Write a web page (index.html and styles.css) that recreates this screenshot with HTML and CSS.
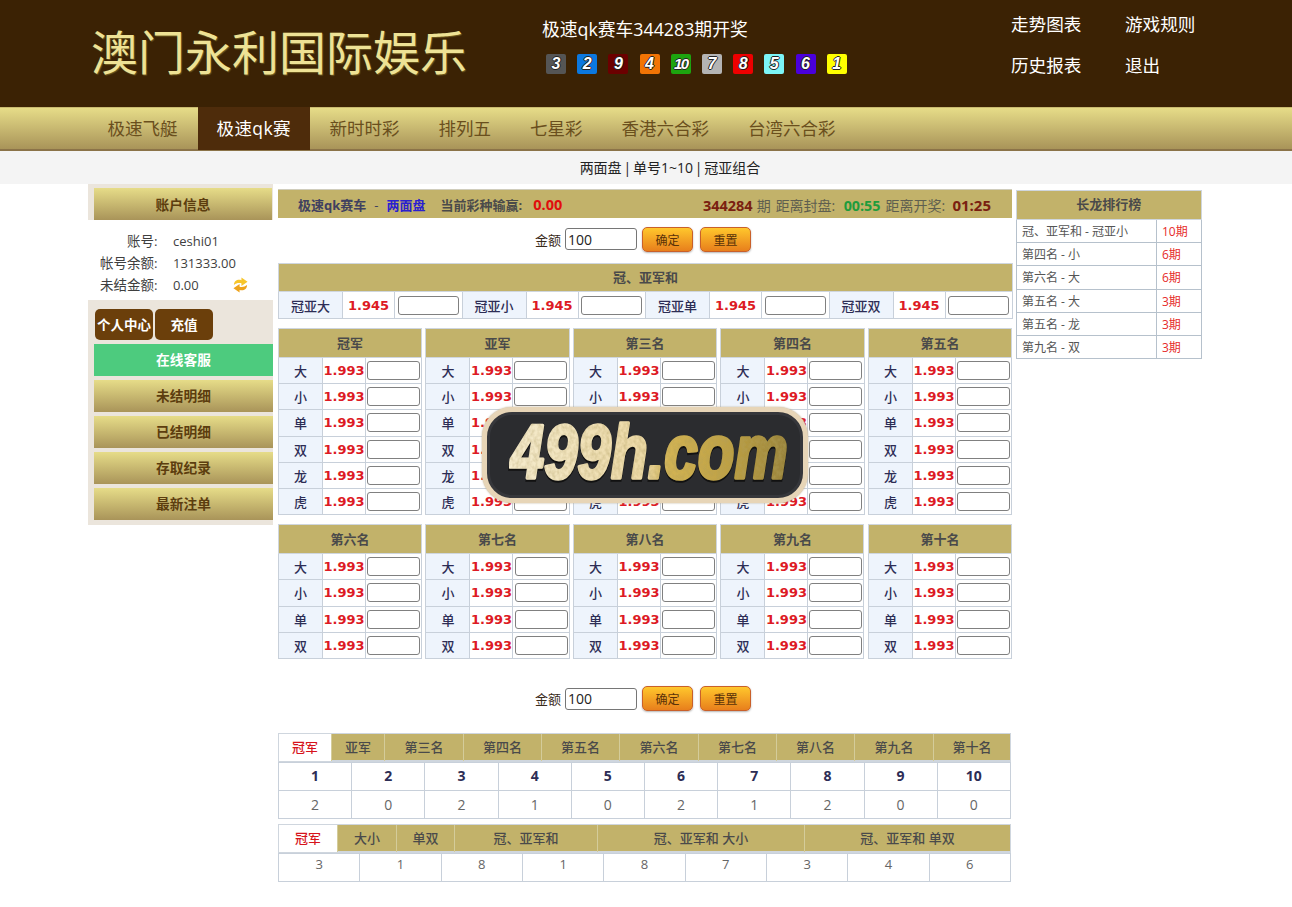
FILE: index.html
```html
<!DOCTYPE html>
<html lang="zh-CN">
<head>
<meta charset="utf-8">
<title>澳门永利国际娱乐</title>
<link rel="stylesheet" href="styles.css">
</head>
<body>
<header class="top">
  <h1 class="brand">澳门永利国际娱乐</h1>
  <div class="draw">
    <p class="draw-title">极速qk赛车344283期开奖</p>
    <div class="balls">
      <span class="ball b3">3</span><span class="ball b2">2</span><span class="ball b9">9</span><span class="ball b4">4</span><span class="ball b10">10</span><span class="ball b7">7</span><span class="ball b8">8</span><span class="ball b5">5</span><span class="ball b6">6</span><span class="ball b1">1</span>
    </div>
  </div>
  <nav class="top-links">
    <a>走势图表</a><a>游戏规则</a><a>历史报表</a><a>退出</a>
  </nav>
</header>
<nav class="mainnav">
  <a>极速飞艇</a><a class="on">极速qk赛</a><a>新时时彩</a><a>排列五</a><a>七星彩</a><a>香港六合彩</a><a>台湾六合彩</a>
</nav>
<div class="subnav">两面盘 | 单号1~10 | 冠亚组合</div>

<div class="layout">
  <aside class="side">
    <div class="side-head"><div class="gold-btn">账户信息</div></div>
    <dl class="info">
      <dt>账号:</dt><dd>ceshi01</dd>
      <dt>帐号余额:</dt><dd>131333.00</dd>
      <dt>未结金额:</dt><dd class="with-icon">0.00
        <svg class="refresh" viewBox="0 0 16 16" width="15" height="16"><path d="M1 8 C1 3.500 5 1.500 9 2.800 L9 0 L15.500 4.500 L9 9 L9 6.200 C6 5.500 3.500 6 1 8Z" fill="#f7c52a"/><path d="M15 8 C15 12.500 11 14.500 7 13.200 L7 16 L0.500 11.500 L7 7 L7 9.800 C10 10.500 12.500 10 15 8Z" fill="#eea31b"/></svg>
      </dd>
    </dl>
    <div class="side-menu">
      <div class="pair"><a class="brown">个人中心</a><a class="brown">充值</a></div>
      <a class="green">在线客服</a>
      <a class="gold-btn">未结明细</a>
      <a class="gold-btn">已结明细</a>
      <a class="gold-btn">存取纪录</a>
      <a class="gold-btn">最新注单</a>
    </div>
  </aside>

  <main class="main">
    <div class="statusbar">
      <div class="st-left"><b>极速qk赛车</b><span class="dash">-</span><b class="blue">两面盘</b><b class="win-label">当前彩种输赢:</b><b class="red-num">0.00</b></div>
      <div class="st-right"><b class="dark-red">344284</b><span class="qi">期</span><span class="lbl">距离封盘:</span><b class="green-time">00:55</b><span class="lbl">距离开奖:</span><b class="dark-red time">01:25</b></div>
    </div>

    <form class="amount first"><label>金额</label><input class="amt" value="100"><button type="button" class="orange">确定</button><button type="button" class="orange">重置</button></form>

    <table class="sum">
      <colgroup><col class="s1"><col class="s2"><col class="s3"><col class="s1"><col class="s2"><col class="s3"><col class="s1"><col class="s2"><col class="s3"><col class="s1"><col class="s2"><col class="s3"></colgroup>
      <tr><th colspan="12">冠、亚军和</th></tr>
      <tr><td class="lb">冠亚大</td><td class="odd">1.945</td><td><input class="bet"></td><td class="lb">冠亚小</td><td class="odd">1.945</td><td><input class="bet"></td><td class="lb">冠亚单</td><td class="odd">1.945</td><td><input class="bet"></td><td class="lb">冠亚双</td><td class="odd">1.945</td><td><input class="bet"></td></tr>
    </table>

    <div class="ranks six">
      <table class="rank"><colgroup><col class="r1"><col class="r2"><col class="r3"></colgroup><tr><th colspan="3">冠军</th></tr>
        <tr><td class="lb">大</td><td class="odd">1.993</td><td><input class="bet"></td></tr><tr><td class="lb">小</td><td class="odd">1.993</td><td><input class="bet"></td></tr><tr><td class="lb">单</td><td class="odd">1.993</td><td><input class="bet"></td></tr><tr><td class="lb">双</td><td class="odd">1.993</td><td><input class="bet"></td></tr><tr><td class="lb">龙</td><td class="odd">1.993</td><td><input class="bet"></td></tr><tr><td class="lb">虎</td><td class="odd">1.993</td><td><input class="bet"></td></tr></table>
      <table class="rank"><colgroup><col class="r1"><col class="r2"><col class="r3"></colgroup><tr><th colspan="3">亚军</th></tr>
        <tr><td class="lb">大</td><td class="odd">1.993</td><td><input class="bet"></td></tr><tr><td class="lb">小</td><td class="odd">1.993</td><td><input class="bet"></td></tr><tr><td class="lb">单</td><td class="odd">1.993</td><td><input class="bet"></td></tr><tr><td class="lb">双</td><td class="odd">1.993</td><td><input class="bet"></td></tr><tr><td class="lb">龙</td><td class="odd">1.993</td><td><input class="bet"></td></tr><tr><td class="lb">虎</td><td class="odd">1.993</td><td><input class="bet"></td></tr></table>
      <table class="rank"><colgroup><col class="r1"><col class="r2"><col class="r3"></colgroup><tr><th colspan="3">第三名</th></tr>
        <tr><td class="lb">大</td><td class="odd">1.993</td><td><input class="bet"></td></tr><tr><td class="lb">小</td><td class="odd">1.993</td><td><input class="bet"></td></tr><tr><td class="lb">单</td><td class="odd">1.993</td><td><input class="bet"></td></tr><tr><td class="lb">双</td><td class="odd">1.993</td><td><input class="bet"></td></tr><tr><td class="lb">龙</td><td class="odd">1.993</td><td><input class="bet"></td></tr><tr><td class="lb">虎</td><td class="odd">1.993</td><td><input class="bet"></td></tr></table>
      <table class="rank"><colgroup><col class="r1"><col class="r2"><col class="r3"></colgroup><tr><th colspan="3">第四名</th></tr>
        <tr><td class="lb">大</td><td class="odd">1.993</td><td><input class="bet"></td></tr><tr><td class="lb">小</td><td class="odd">1.993</td><td><input class="bet"></td></tr><tr><td class="lb">单</td><td class="odd">1.993</td><td><input class="bet"></td></tr><tr><td class="lb">双</td><td class="odd">1.993</td><td><input class="bet"></td></tr><tr><td class="lb">龙</td><td class="odd">1.993</td><td><input class="bet"></td></tr><tr><td class="lb">虎</td><td class="odd">1.993</td><td><input class="bet"></td></tr></table>
      <table class="rank"><colgroup><col class="r1"><col class="r2"><col class="r3"></colgroup><tr><th colspan="3">第五名</th></tr>
        <tr><td class="lb">大</td><td class="odd">1.993</td><td><input class="bet"></td></tr><tr><td class="lb">小</td><td class="odd">1.993</td><td><input class="bet"></td></tr><tr><td class="lb">单</td><td class="odd">1.993</td><td><input class="bet"></td></tr><tr><td class="lb">双</td><td class="odd">1.993</td><td><input class="bet"></td></tr><tr><td class="lb">龙</td><td class="odd">1.993</td><td><input class="bet"></td></tr><tr><td class="lb">虎</td><td class="odd">1.993</td><td><input class="bet"></td></tr></table>
    </div>

    <div class="ranks four">
      <table class="rank"><colgroup><col class="r1"><col class="r2"><col class="r3"></colgroup><tr><th colspan="3">第六名</th></tr>
        <tr><td class="lb">大</td><td class="odd">1.993</td><td><input class="bet"></td></tr><tr><td class="lb">小</td><td class="odd">1.993</td><td><input class="bet"></td></tr><tr><td class="lb">单</td><td class="odd">1.993</td><td><input class="bet"></td></tr><tr><td class="lb">双</td><td class="odd">1.993</td><td><input class="bet"></td></tr></table>
      <table class="rank"><colgroup><col class="r1"><col class="r2"><col class="r3"></colgroup><tr><th colspan="3">第七名</th></tr>
        <tr><td class="lb">大</td><td class="odd">1.993</td><td><input class="bet"></td></tr><tr><td class="lb">小</td><td class="odd">1.993</td><td><input class="bet"></td></tr><tr><td class="lb">单</td><td class="odd">1.993</td><td><input class="bet"></td></tr><tr><td class="lb">双</td><td class="odd">1.993</td><td><input class="bet"></td></tr></table>
      <table class="rank"><colgroup><col class="r1"><col class="r2"><col class="r3"></colgroup><tr><th colspan="3">第八名</th></tr>
        <tr><td class="lb">大</td><td class="odd">1.993</td><td><input class="bet"></td></tr><tr><td class="lb">小</td><td class="odd">1.993</td><td><input class="bet"></td></tr><tr><td class="lb">单</td><td class="odd">1.993</td><td><input class="bet"></td></tr><tr><td class="lb">双</td><td class="odd">1.993</td><td><input class="bet"></td></tr></table>
      <table class="rank"><colgroup><col class="r1"><col class="r2"><col class="r3"></colgroup><tr><th colspan="3">第九名</th></tr>
        <tr><td class="lb">大</td><td class="odd">1.993</td><td><input class="bet"></td></tr><tr><td class="lb">小</td><td class="odd">1.993</td><td><input class="bet"></td></tr><tr><td class="lb">单</td><td class="odd">1.993</td><td><input class="bet"></td></tr><tr><td class="lb">双</td><td class="odd">1.993</td><td><input class="bet"></td></tr></table>
      <table class="rank"><colgroup><col class="r1"><col class="r2"><col class="r3"></colgroup><tr><th colspan="3">第十名</th></tr>
        <tr><td class="lb">大</td><td class="odd">1.993</td><td><input class="bet"></td></tr><tr><td class="lb">小</td><td class="odd">1.993</td><td><input class="bet"></td></tr><tr><td class="lb">单</td><td class="odd">1.993</td><td><input class="bet"></td></tr><tr><td class="lb">双</td><td class="odd">1.993</td><td><input class="bet"></td></tr></table>
    </div>

    <form class="amount second"><label>金额</label><input class="amt" value="100"><button type="button" class="orange">确定</button><button type="button" class="orange">重置</button></form>

    <div class="tabs tabs-a"><a class="on">冠军</a><a>亚军</a><a>第三名</a><a>第四名</a><a>第五名</a><a>第六名</a><a>第七名</a><a>第八名</a><a>第九名</a><a>第十名</a></div>
    <table class="stats ten">
      <tr class="nums"><td>1</td><td>2</td><td>3</td><td>4</td><td>5</td><td>6</td><td>7</td><td>8</td><td>9</td><td>10</td></tr>
      <tr><td>2</td><td>0</td><td>2</td><td>1</td><td>0</td><td>2</td><td>1</td><td>2</td><td>0</td><td>0</td></tr>
    </table>
    <div class="tabs tabs-b"><a class="on">冠军</a><a>大小</a><a>单双</a><a>冠、亚军和</a><a>冠、亚军和 大小</a><a>冠、亚军和 单双</a></div>
    <table class="stats nine">
      <tr><td>3</td><td>1</td><td>8</td><td>1</td><td>8</td><td>7</td><td>3</td><td>4</td><td>6</td></tr>
    </table>
  </main>

  <aside class="dragon">
    <table class="dragon-table">
      <colgroup><col class="d1"><col class="d2"></colgroup>
      <tr><th colspan="2">长龙排行榜</th></tr>
      <tr><td>冠、亚军和 - 冠亚小</td><td class="period">10期</td></tr>
      <tr><td>第四名 - 小</td><td class="period">6期</td></tr>
      <tr><td>第六名 - 大</td><td class="period">6期</td></tr>
      <tr><td>第五名 - 大</td><td class="period">3期</td></tr>
      <tr><td>第五名 - 龙</td><td class="period">3期</td></tr>
      <tr><td>第九名 - 双</td><td class="period">3期</td></tr>
    </table>
  </aside>
</div>

<div class="watermark">
  <svg class="wm-svg" viewBox="0 0 316 86" width="316" height="86">
    <defs>
      <linearGradient id="wmGold" gradientUnits="userSpaceOnUse" x1="34" y1="0" x2="390" y2="0">
        <stop offset="0" stop-color="#f5ebcd"/>
        <stop offset="0.48" stop-color="#ecd9a6"/>
        <stop offset="0.56" stop-color="#d2b354"/>
        <stop offset="0.78" stop-color="#bda044"/>
        <stop offset="1" stop-color="#95803a"/>
      </linearGradient>
      <filter id="wmGrain" x="0" y="0" width="100%" height="100%">
        <feTurbulence type="fractalNoise" baseFrequency="0.22" numOctaves="2" seed="4" result="n"/>
        <feColorMatrix in="n" type="matrix" values="0 0 0 0 0.45  0 0 0 0 0.35  0 0 0 0 0.1  0 0 0 0.9 -0.3" result="spots"/>
        <feComposite in="spots" in2="SourceAlpha" operator="in" result="inside"/>
        <feMerge><feMergeNode in="SourceGraphic"/><feMergeNode in="inside"/></feMerge>
      </filter>
    </defs>
    <g transform="translate(-3 0) scale(0.79 1)">
      <text class="wm-shadow" x="34" y="68">499h.com</text>
      <text class="wm-text" x="34" y="66" fill="url(#wmGold)" stroke="url(#wmGold)" filter="url(#wmGrain)">499h.com</text>
    </g>
  </svg>
</div>
</body>
</html>
```
FILE: styles.css
```css
* { box-sizing: border-box; }
html, body { margin: 0; padding: 0; }
body {
  font-family: "Open Sans", "Noto Sans CJK SC", sans-serif;
  font-size: 13px;
  color: #333;
  background: #fff;
  width: 1292px;
  height: 907px;
  overflow: hidden;
  position: relative;
}
a { color: inherit; text-decoration: none; }

/* top header */
.top {
  height: 107px;
  background: #3b2204;
  padding-left: 91px;
  display: flex;
}
.brand {
  margin: 0;
  width: 451px;
  padding-top: 18px;
  font-size: 47px;
  line-height: 68px;
  font-weight: 400;
  color: #eee295;
  white-space: nowrap;
  text-shadow: 1px 1px 1px #6d5a22;
}
.draw { width: 469px; padding-top: 16px; }
.draw-title { margin: 0; font-size: 17.8px; line-height: 26px; color: #fff; white-space: nowrap; }
.balls { display: flex; gap: 11.2px; margin-top: 12px; padding-left: 4px; }
.ball {
  width: 20px;
  height: 20px;
  border-radius: 2px;
  text-align: center;
  font: italic bold 16px/20px "Liberation Sans", sans-serif;
  color: #fff;
  text-shadow: -1px 0 0 #222, 1px 0 0 #222, 0 -1px 0 #222, 0 1px 0 #222;
}
.b3 { background: #555; }
.b2 { background: #0b78e0; }
.b9 { background: #6b0000; }
.b4 { background: #f27405; }
.b10 { background: #1da40f; letter-spacing: -1.5px; font-size: 15px; }
.b7 { background: #b4b4b4; }
.b8 { background: #ee0000; }
.b5 { background: #7cf5f7; }
.b6 { background: #4a00dd; }
.b1 { background: #ffff00; }
.top-links {
  display: grid;
  grid-template-columns: 114px 80px;
  grid-auto-rows: 41px;
  padding-top: 4px;
  font-size: 17.6px;
  line-height: 41px;
  color: #fff;
}

/* main nav */
.mainnav {
  height: 44px;
  padding-left: 88px;
  display: flex;
  background: linear-gradient(#e6dc88, #a99459);
  border-top: 1px solid #c9ba70;
  border-bottom: 2px solid #8b7348;
  font-size: 17.5px;
  line-height: 41px;
  color: #6a4f1d;
}
.mainnav a { padding: 0 19.500px; white-space: nowrap; }
.mainnav a.on { background: #4e2c0b; color: #fff; margin: -1px 0 -1px 1px; padding: 1px 19px 0 18.500px; letter-spacing: 0.4px; }
.subnav {
  height: 33px;
  padding-left: 48px;
  background: #f4f4f4;
  text-align: center;
  font-size: 14px;
  word-spacing: -1.8px;
  line-height: 34px;
  color: #222;
}

/* layout */
.layout { display: flex; margin-left: 88px; align-items: flex-start; }

/* left side */
.side { width: 185px; }
.side-head { background: #ebe5dc; padding: 4px 1px 0 6px; height: 36px; }
.gold-btn {
  display: block;
  height: 32px;
  background: linear-gradient(#e6dc88, #a99459);
  text-align: center;
  font-size: 13.7px;
  font-weight: 700;
  line-height: 33px;
  color: #5c3d0e;
}
.info {
  margin: 0;
  height: 80px;
  padding-top: 10px;
  display: grid;
  grid-template-columns: 69.500px 1fr;
  grid-auto-rows: 22px;
  column-gap: 15.500px;
  line-height: 22px;
  font-size: 13px;
  color: #3f3f3f;
}
.info dt { text-align: right; font-size: 13.500px; white-space: nowrap; }
.info dd { margin: 0; }
.with-icon { display: flex; align-items: center; gap: 34px; }
.refresh { flex: none; }
.side-menu {
  background: #ebe5dc;
  height: 225px;
  padding: 9px 0 0 6px;
  display: flex;
  flex-direction: column;
  gap: 4px;
}
.side-menu .gold-btn { line-height: 32px; }
.pair { display: flex; gap: 2px; padding-left: 1px; height: 31px; }
.brown {
  width: 58px;
  border-radius: 5px;
  background: #6b3f0b;
  color: #fff;
  font-weight: 700;
  text-align: center;
  line-height: 32px;
  font-size: 13.500px;
  white-space: nowrap;
}
.green {
  height: 32px;
  background: #4dcb7e;
  color: #fff;
  font-weight: 700;
  font-size: 13.700px;
  text-align: center;
  line-height: 32px;
}

/* middle */
.main { width: 734px; margin-left: 5px; padding-top: 5px; }
.statusbar {
  height: 29px;
  background: #c2b26a;
  border-top: 1px solid #d0cdbc;
  padding: 1px 21px 0 20px;
  display: flex;
  justify-content: space-between;
  align-items: center;
  color: #5f5f4f;
  white-space: nowrap;
}
.st-left b { font-weight: 700; color: #404060; }
.dash { margin: 0 8px; color: #404060; }
.st-left .blue { color: #2a20d0; }
.st-left .win-label { margin-left: 15px; color: #4a4a4a; }
.st-left .red-num { margin-left: 11px; color: #e00d0d; font-size: 14.500px; }
.st-right { display: flex; align-items: baseline; font-size: 14px; }
.st-right .qi { margin-left: 4px; }
.st-right .lbl { margin-left: 5px; width: 63px; white-space: nowrap; }
.dark-red { color: #7a2010; font-size: 14.500px; }
.green-time { color: #1f9c3c; font-size: 14.300px; margin-left: 5px; }
.time { font-size: 15px; margin-left: 4px; }
.amount {
  display: flex;
  justify-content: center;
  align-items: center;
  height: 26px;
  padding-right: 4px;
  color: #3a2a1a;
}
.amount.first { margin-top: 8px; }
.amount.second { margin-top: 27px; }
.amount label { margin-right: 4px; }
.amt {
  width: 72px;
  height: 22px;
  padding: 0 2px;
  border: 1px solid #767676;
  border-radius: 3px;
  font: 14px "Open Sans", sans-serif;
  color: #222;
  margin-right: 5px;
}
.orange {
  width: 51px;
  height: 25px;
  padding: 0;
  border: 1px solid #c9602a;
  border-radius: 5px;
  background: linear-gradient(#ffc72c, #e87f1c);
  box-shadow: 0 1px 2px #b5b5b5;
  font: 12px "Noto Sans CJK SC", sans-serif;
  color: #5a3208;
  margin-right: 7px;
}
.orange:last-child { margin-right: 0; }
table { border-collapse: collapse; table-layout: fixed; }
th {
  background: #c2b26a;
  border: 1px solid #cfd6de;
  font-weight: 700;
  font-size: 13px;
  color: #4a4a4a;
  padding: 0 0 2px;
}
td { border: 1px solid #c8d0da; padding: 0; text-align: center; }
.lb { background: #eef4fc; color: #2d2d55; font-size: 13px; font-weight: 500; }
.odd { font: bold 13px "DejaVu Sans", sans-serif; color: #dd1a24; }
.bet {
  display: block;
  margin: 0 auto;
  height: 19px;
  border: 1px solid #808080;
  border-radius: 3px;
  background: #fff;
  padding: 0;
}
.sum { width: 734px; margin-top: 11px; }
.sum th { height: 28px; }
.sum td { height: 27px; }
.s1 { width: 64px; }
.s2 { width: 52px; }
.s3 { width: 67.500px; }
.sum .bet { width: 61px; }
.ranks { display: flex; justify-content: space-between; }
.six { margin-top: 9px; }
.four { margin-top: 9px; }
.rank { width: 143px; }
.rank th { height: 29px; }
.rank td { height: 26.200px; }
.r1 { width: 44px; }
.r2 { width: 43px; }
.r3 { width: 56px; }
.rank .bet { width: 53px; }
.tabs {
  display: grid;
  height: 29px;
  background: #c2b26a;
  border: 1px solid #cfd6de;
  border-bottom: 2px solid #cfd6de;
  font-size: 13px;
  font-weight: 500;
  color: #4a4a4a;
  line-height: 27px;
  text-align: center;
}
.tabs a { border-left: 1px solid #d4cc9a; }
.tabs a.on { background: #fff; color: #d6141c; border-left: 0; }
.tabs-a { margin-top: 21px; width: 733px; grid-template-columns: 52px 53px 79px 78px 78px 79px 78px 78px 79px 1fr; }
.tabs-b { margin-top: 5px; width: 733px; grid-template-columns: 58px 59px 58px 143px 207px 1fr; }
.stats { width: 733px; }
.ten td { height: 28px; color: #666; font-size: 14px; }
.ten .nums td { font-weight: 700; color: #2d2d55; font-size: 14px; padding-bottom: 2px; }
.nine td { height: 28px; color: #666; font-size: 13px; vertical-align: top; line-height: 20px; }

/* right */
.dragon { width: 185px; margin-left: 4px; padding-top: 6px; }
.dragon-table { width: 184.500px; }
.dragon-table th { height: 29px; font-size: 13px; padding-bottom: 3px; }
.dragon-table td { height: 23.200px; font-size: 12px; color: #555; text-align: left; padding-left: 5px; white-space: nowrap; border-color: #b6c1cc; }
.d1 { width: 140px; }
.d2 { width: 44.500px; }
.dragon-table .period { color: #e62b2b; }

/* watermark logo */
.watermark {
  position: absolute;
  left: 482px;
  top: 407px;
  width: 326px;
  height: 96px;
  border: 5px solid #e7d5b7;
  border-radius: 30px;
  background: #2b2c2f;
  box-shadow: inset 0 0 0 3px #36373b, 0 0 2px #b7a68a;
}
.wm-svg { display: block; }
.wm-text {
  font: italic bold 76px "Liberation Sans", sans-serif;
  stroke-width: 3.500px;
  stroke-linejoin: round;
}
.wm-shadow {
  font: italic bold 76px "Liberation Sans", sans-serif;
  fill: #111;
  stroke: #111;
  stroke-width: 3.500px;
}
```
